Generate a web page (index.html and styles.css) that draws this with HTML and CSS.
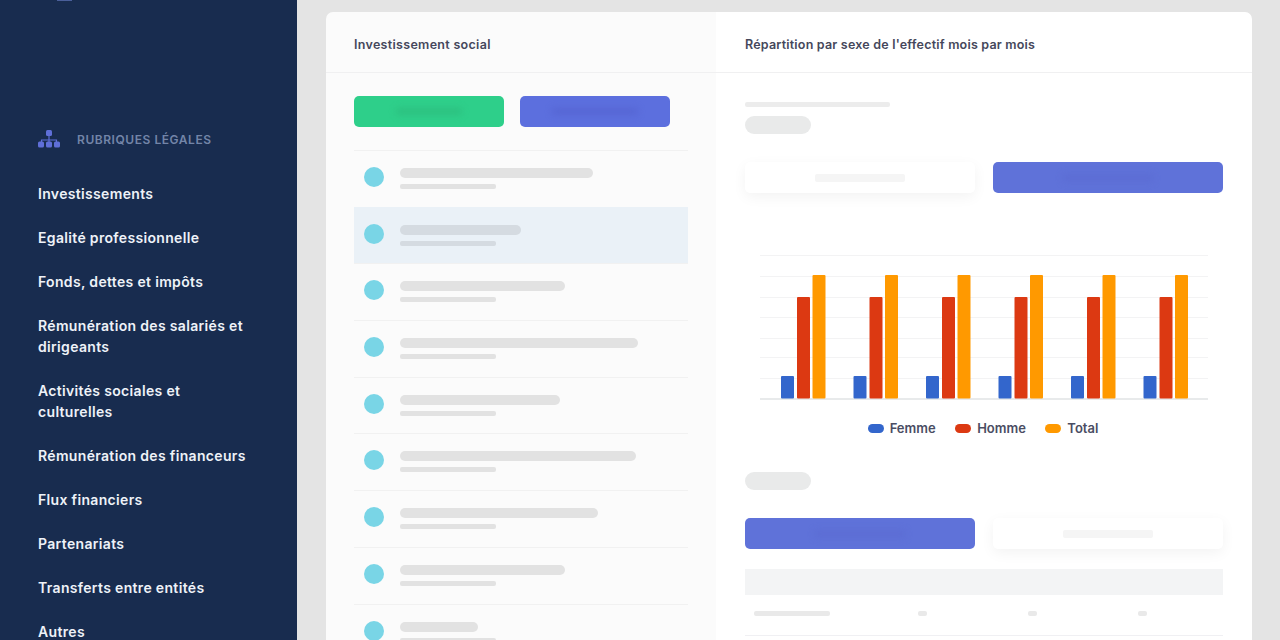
FILE: index.html
```html
<!DOCTYPE html>
<html lang="fr">
<head>
    <meta charset="UTF-8">
    <meta name="viewport" content="width=device-width, initial-scale=1.0">
    <title>Investissement social</title>
    <link rel="stylesheet" href="styles.css">
</head>
<body>
    <aside class="sidebar">
        <div class="logo-edge"></div>
        <div class="section-title">
            <svg class="section-icon" viewBox="0 0 22 18" width="22" height="18">
                <rect x="8" y="0" width="6" height="6" rx="1.5" fill="#5f6fd8"/>
                <path d="M11 6v4M3.500 12v-2h15v2M11 10v2" fill="none" stroke="#5f6fd8" stroke-width="1.2"/>
                <rect x="0" y="11.500" width="6" height="6" rx="1.5" fill="#5f6fd8"/>
                <rect x="8" y="11.500" width="6" height="6" rx="1.5" fill="#5f6fd8"/>
                <rect x="16" y="11.500" width="6" height="6" rx="1.5" fill="#5f6fd8"/>
            </svg>
            <span class="section-label">RUBRIQUES LÉGALES</span>
        </div>
        <nav class="menu">
            <a>Investissements</a>
            <a>Egalité professionnelle</a>
            <a>Fonds, dettes et impôts</a>
            <a>Rémunération des salariés et dirigeants</a>
            <a>Activités sociales et culturelles</a>
            <a>Rémunération des financeurs</a>
            <a>Flux financiers</a>
            <a>Partenariats</a>
            <a>Transferts entre entités</a>
            <a>Autres</a>
        </nav>
    </aside>

    <main class="main">
        <div class="card">
            <!-- Colonne gauche -->
            <section class="panel panel-left">
                <h2 class="panel-title">Investissement social</h2>
                <div class="panel-body">
                    <div class="btn-row">
                        <div class="btn btn-green"><span class="btn-label"></span></div>
                        <div class="btn btn-blue"><span class="btn-label"></span></div>
                    </div>
                    <div class="list">
                        <div class="row"><i class="dot"></i><div class="lines"><b class="w193"></b><u></u></div></div>
                        <div class="row row-active"><i class="dot"></i><div class="lines"><b class="w121"></b><u></u></div></div>
                        <div class="row"><i class="dot"></i><div class="lines"><b class="w165"></b><u></u></div></div>
                        <div class="row"><i class="dot"></i><div class="lines"><b class="w238"></b><u></u></div></div>
                        <div class="row"><i class="dot"></i><div class="lines"><b class="w160"></b><u></u></div></div>
                        <div class="row"><i class="dot"></i><div class="lines"><b class="w236"></b><u></u></div></div>
                        <div class="row"><i class="dot"></i><div class="lines"><b class="w198"></b><u></u></div></div>
                        <div class="row"><i class="dot"></i><div class="lines"><b class="w165"></b><u></u></div></div>
                        <div class="row"><i class="dot"></i><div class="lines"><b class="w78"></b><u></u></div></div>
                    </div>
                </div>
            </section>

            <!-- Colonne droite -->
            <section class="panel panel-right">
                <h2 class="panel-title">Répartition par sexe de l'effectif mois par mois</h2>
                <div class="panel-body">
                    <div class="skel-line"></div>
                    <div class="skel-pill"></div>
                    <div class="tabs">
                        <div class="tab tab-white"><span class="tab-label"></span></div>
                        <div class="tab tab-blue"><span class="tab-label"></span></div>
                    </div>

                    <svg class="chart" viewBox="0 0 478 165" width="478" height="165">
                        <path d="M15 10.500H463M15 31.500H463M15 52.500H463M15 72.500H463M15 93.500H463M15 112.500H463M15 133.500H463" stroke="#f3f3f4" stroke-width="1"/>
                        <path d="M15 154H463" stroke="#e1e3e5" stroke-width="1.500"/>
                        <rect x="36" y="131" width="13" height="22.500" rx="1" fill="#3366cc"/>
                        <rect x="52" y="52" width="13" height="101.500" rx="1" fill="#dc3912"/>
                        <rect x="67.500" y="30" width="13" height="123.500" rx="1" fill="#ff9900"/>
                        <rect x="108.500" y="131" width="13" height="22.500" rx="1" fill="#3366cc"/>
                        <rect x="124.500" y="52" width="13" height="101.500" rx="1" fill="#dc3912"/>
                        <rect x="140" y="30" width="13" height="123.500" rx="1" fill="#ff9900"/>
                        <rect x="181" y="131" width="13" height="22.500" rx="1" fill="#3366cc"/>
                        <rect x="197" y="52" width="13" height="101.500" rx="1" fill="#dc3912"/>
                        <rect x="212.500" y="30" width="13" height="123.500" rx="1" fill="#ff9900"/>
                        <rect x="253.500" y="131" width="13" height="22.500" rx="1" fill="#3366cc"/>
                        <rect x="269.500" y="52" width="13" height="101.500" rx="1" fill="#dc3912"/>
                        <rect x="285" y="30" width="13" height="123.500" rx="1" fill="#ff9900"/>
                        <rect x="326" y="131" width="13" height="22.500" rx="1" fill="#3366cc"/>
                        <rect x="342" y="52" width="13" height="101.500" rx="1" fill="#dc3912"/>
                        <rect x="357.500" y="30" width="13" height="123.500" rx="1" fill="#ff9900"/>
                        <rect x="398.500" y="131" width="13" height="22.500" rx="1" fill="#3366cc"/>
                        <rect x="414.500" y="52" width="13" height="101.500" rx="1" fill="#dc3912"/>
                        <rect x="430" y="30" width="13" height="123.500" rx="1" fill="#ff9900"/>
                    </svg>

                    <div class="legend">
                        <div class="legend-item"><i class="swatch swatch-blue"></i>Femme</div>
                        <div class="legend-item"><i class="swatch swatch-red"></i>Homme</div>
                        <div class="legend-item"><i class="swatch swatch-orange"></i>Total</div>
                    </div>

                    <div class="skel-pill skel-pill-2"></div>
                    <div class="tabs tabs-2">
                        <div class="tab tab-blue"><span class="tab-label"></span></div>
                        <div class="tab tab-white"><span class="tab-label"></span></div>
                    </div>

                    <div class="table-head"></div>
                    <div class="table-row">
                        <span class="cell-name"></span>
                        <span class="cell-num"></span>
                        <span class="cell-num"></span>
                        <span class="cell-num"></span>
                    </div>
                </div>
            </section>
        </div>
    </main>
</body>
</html>
```

FILE: styles.css
```css
* {
    box-sizing: border-box;
}
html, body {
    height: 640px;
    overflow: hidden;
}
body {
    margin: 0;
    display: flex;
    font-family: Inter, "Liberation Sans", sans-serif;
    background-color: #e4e4e4;
}

/* Barre laterale */
.sidebar {
    width: 297px;
    height: 640px;
    flex-shrink: 0;
    padding-left: 38px;
    padding-right: 40px;
    background-color: #182c4f;
    overflow: hidden;
}
.logo-edge {
    width: 15px;
    height: 1px;
    margin-left: 19px;
    background-color: #4a5f9a;
}
.section-title {
    display: flex;
    align-items: center;
    gap: 17px;
    height: 18px;
    margin-top: 129px;
    font-size: 12px;
    font-weight: 600;
    letter-spacing: 0.55px;
    color: #7385a8;
}
.section-label {
    padding-top: 1px;
}
.section-icon {
    flex-shrink: 0;
}
.menu {
    display: flex;
    flex-direction: column;
    gap: 23px;
    margin-top: 34.5px;
}
.menu a {
    font-size: 14px;
    line-height: 21px;
    font-weight: 600;
    letter-spacing: 0.33px;
    color: #eef2f8;
}

/* Carte principale */
.main {
    flex: 1;
    height: 640px;
    padding: 12px 28px 0 29px;
    overflow: hidden;
}
.card {
    display: grid;
    grid-template-columns: 390px 536px;
    height: 640px;
    border-radius: 7px;
    overflow: hidden;
}
.panel-left {
    background-color: #fbfbfb;
}
.panel-right {
    background-color: #ffffff;
}
.panel-title {
    display: flex;
    align-items: center;
    height: 61px;
    margin: 0;
    padding-top: 4px;
    border-bottom: 1px solid #f0f0f1;
    font-size: 12.5px;
    font-weight: 600;
    letter-spacing: 0.2px;
    color: #45475b;
}
.panel-left .panel-title {
    padding-left: 28px;
    letter-spacing: 0.3px;
}
.panel-right .panel-title {
    padding-left: 29px;
}

/* Colonne gauche */
.panel-left .panel-body {
    padding: 23px 28px 0;
}
.btn-row {
    display: flex;
    gap: 16px;
}
.btn {
    display: flex;
    align-items: center;
    justify-content: center;
    width: 150px;
    height: 31px;
    border-radius: 5px;
}
.btn-green {
    background-color: #2ecf8a;
}
.btn-blue {
    background-color: #5c6fde;
}
.btn-label {
    width: 66px;
    height: 7px;
    border-radius: 3px;
    filter: blur(3px);
}
.btn-green .btn-label {
    background-color: #2cc080;
}
.btn-blue .btn-label {
    width: 86px;
    background-color: #5666d4;
}
.list {
    width: 334px;
    margin-top: 23px;
}
.row {
    display: flex;
    gap: 16px;
    height: 56.7px;
    padding: 16px 0 0 10px;
    border-top: 1px solid #f1f1f1;
}
.row-active {
    background-color: #eaf1f7;
    border-top-color: #eaf1f7;
}
.dot {
    width: 20px;
    height: 20px;
    border-radius: 50%;
    background-color: #79d5e6;
}
.lines {
    display: flex;
    flex-direction: column;
    gap: 6px;
    padding-top: 1px;
}
.lines b {
    display: block;
    height: 10px;
    border-radius: 5px;
    background-color: #e2e2e2;
}
.lines u {
    display: block;
    width: 96px;
    height: 5px;
    border-radius: 2px;
    background-color: #e2e2e2;
}
.row-active b, .row-active u {
    background-color: #d5dbe1;
}
.w78 { width: 78px; }
.w121 { width: 121px; }
.w160 { width: 160px; }
.w165 { width: 165px; }
.w193 { width: 193px; }
.w198 { width: 198px; }
.w236 { width: 236px; }
.w238 { width: 238px; }

/* Colonne droite */
.panel-right .panel-body {
    padding: 29px 29px 0;
}
.skel-line {
    width: 145px;
    height: 5px;
    border-radius: 2px;
    background-color: #ececec;
}
.skel-pill {
    width: 66px;
    height: 18px;
    margin-top: 9px;
    border-radius: 9px;
    background-color: #e9eaea;
}
.skel-pill-2 {
    margin-top: 35px;
}
.tabs {
    display: flex;
    gap: 18px;
    margin-top: 28px;
}
.tab {
    display: flex;
    align-items: center;
    justify-content: center;
    width: 230px;
    height: 31px;
    border-radius: 5px;
}
.tab-white {
    background-color: #ffffff;
    box-shadow: 0 4px 14px rgba(0, 0, 0, 0.05);
}
.tab-blue {
    background-color: #5f72d9;
}
.tab-label {
    width: 90px;
    height: 8px;
    border-radius: 2px;
}
.tab-white .tab-label {
    background-color: #f5f5f5;
}
.tab-blue .tab-label {
    background-color: #5c6dd4;
    filter: blur(3px);
}
.chart {
    display: block;
    margin-top: 52px;
}
.legend {
    display: flex;
    justify-content: center;
    gap: 19.5px;
    margin-top: 9px;
    margin-left: -2px;
}
.legend-item {
    display: flex;
    align-items: center;
    gap: 6px;
    height: 18px;
    font-size: 13px;
    font-weight: 600;
    color: #4a4d63;
}
.swatch {
    width: 16px;
    height: 9px;
    border-radius: 5px;
}
.swatch-blue { background-color: #3366cc; }
.swatch-red { background-color: #dc3912; }
.swatch-orange { background-color: #ff9900; }
.table-head {
    height: 26px;
    margin-top: 20px;
    background-color: #f3f4f5;
}
.table-row {
    display: grid;
    grid-template-columns: 164px 110px 110px 9px;
    height: 41px;
    padding: 16px 0 0 9px;
    border-bottom: 1px solid #f0f0f3;
}
.cell-name {
    width: 76px;
    height: 5px;
    border-radius: 2px;
    background-color: #e9e9e9;
}
.cell-num {
    width: 9px;
    height: 5px;
    border-radius: 2px;
    background-color: #e9e9e9;
}
```
